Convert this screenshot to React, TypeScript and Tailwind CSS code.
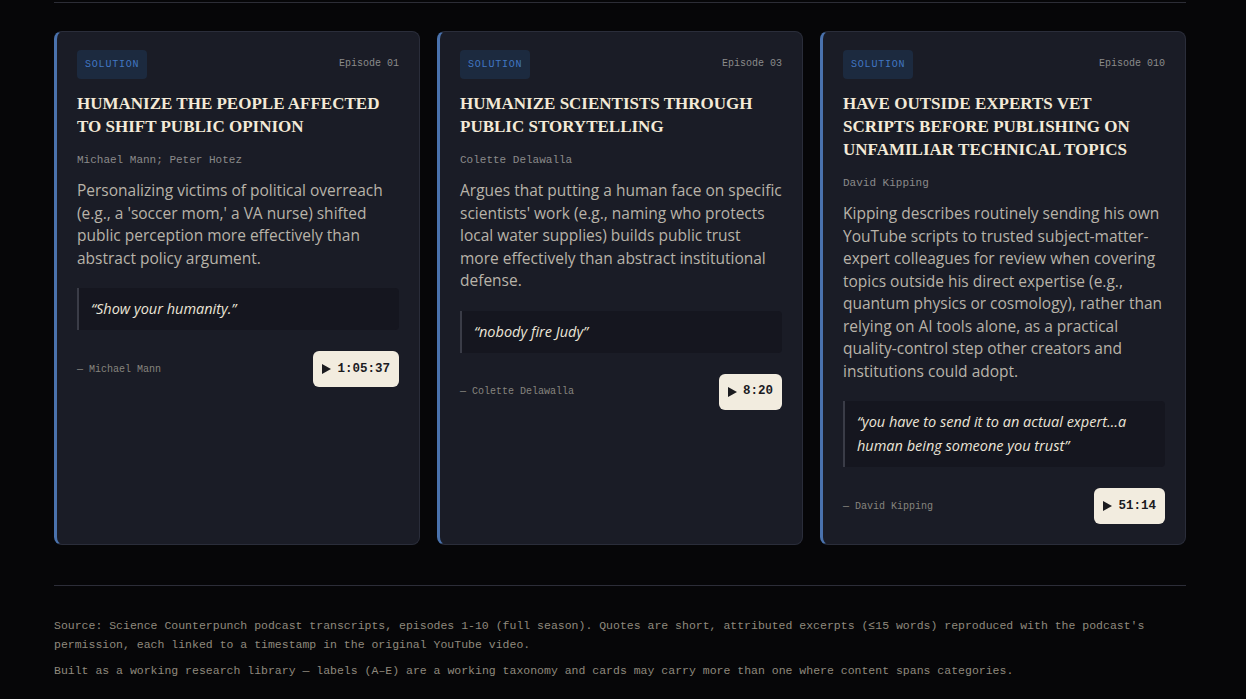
import React from 'react';

interface Solution {
  episode: string;
  title: string;
  speakers: string;
  summary: string;
  quote: string;
  quoteBy: string;
  stamp: string;
}

const solutions: Solution[] = [
  {
    episode: 'Episode 01',
    title: 'Humanize the people affected to shift public opinion',
    speakers: 'Michael Mann; Peter Hotez',
    summary:
      "Personalizing victims of political overreach (e.g., a 'soccer mom,' a VA nurse) shifted public perception more effectively than abstract policy argument.",
    quote: '\u201CShow your humanity.\u201D',
    quoteBy: 'Michael Mann',
    stamp: '1:05:37',
  },
  {
    episode: 'Episode 03',
    title: 'Humanize scientists through public storytelling',
    speakers: 'Colette Delawalla',
    summary:
      "Argues that putting a human face on specific scientists' work (e.g., naming who protects local water supplies) builds public trust more effectively than abstract institutional defense.",
    quote: '\u201Cnobody fire Judy\u201D',
    quoteBy: 'Colette Delawalla',
    stamp: '8:20',
  },
  {
    episode: 'Episode 010',
    title: 'Have outside experts vet scripts before publishing on unfamiliar technical topics',
    speakers: 'David Kipping',
    summary:
      'Kipping describes routinely sending his own YouTube scripts to trusted subject-matter-expert colleagues for review when covering topics outside his direct expertise (e.g., quantum physics or cosmology), rather than relying on AI tools alone, as a practical quality-control step other creators and institutions could adopt.',
    quote: '\u201Cyou have to send it to an actual expert\u2026a human being someone you trust\u201D',
    quoteBy: 'David Kipping',
    stamp: '51:14',
  },
];

const mono = "font-['Liberation_Mono','DejaVu_Sans_Mono',monospace]";
const body = "font-['Open_Sans','Noto_Sans',sans-serif]";

function SolutionCard({ s }: { s: Solution }) {
  return (
    <article className="flex flex-col rounded-lg border border-[#2a2d3a] border-l-[3px] border-l-[#4a72ad] bg-[#1a1c26] px-5 pt-[18px] pb-5">
      <div className="flex items-start justify-between">
        <span className={`${mono} rounded bg-[#1c2a3f] px-2 py-[8px] text-[10px] leading-[13px] tracking-[0.08em] text-[#4176c2]`}>
          SOLUTION
        </span>
        <span className={`${mono} pt-[6px] text-[10px] text-[#8b8b8b]`}>{s.episode}</span>
      </div>

      <h3 className="mt-[13px] font-['Liberation_Serif','DejaVu_Serif',serif] text-[17px] font-bold uppercase leading-[23px] text-[#f3ead8]">
        {s.title}
      </h3>

      <p className={`${mono} mt-[14px] text-[11px] leading-4 text-[#8a8a8a]`}>{s.speakers}</p>

      <p className={`${body} mt-[11px] text-[15.5px] leading-[22.5px] text-[#b8b3a9]`}>{s.summary}</p>

      <blockquote className={`${body} mt-[19px] rounded-r border-l-2 border-[#3a3c47] bg-[#15161f] py-[9px] pl-3 pr-3 text-[14.5px] italic leading-6 text-[#ebe5d8]`}>
        {s.quote}
      </blockquote>

      <div className="mt-[21px] flex items-center justify-between">
        <span className={`${mono} text-[10px] text-[#86847e]`}>{'\u2014'} {s.quoteBy}</span>
        <button className={`${mono} flex h-9 items-center gap-[6px] rounded-md bg-[#f2ecdf] px-[9px] text-[12.5px] font-bold text-[#1b1b1f]`}>
          <svg width="9" height="10" viewBox="0 0 9 10" className="fill-[#1b1b1f]">
            <path d="M0 0 L9 5 L0 10 Z" />
          </svg>
          {s.stamp}
        </button>
      </div>
    </article>
  );
}

export default function App() {
  return (
    <div className="min-h-screen bg-[#060608] pt-[2px] pl-[54px]">
      <div className="w-[1132px]">
        <div className="border-t border-[#2c2d36]" />

        <div className="mt-[28px] grid grid-cols-3 gap-[17px]">
          {solutions.map(s => (
            <SolutionCard key={s.episode} s={s} />
          ))}
        </div>

        <hr className="mt-[40px] border-[#2c2d38]" />

        <footer className={`${mono} pt-[30px] text-[11.5px] leading-[19px] text-[#8f897d]`}>
          <p>
            Source: Science Counterpunch podcast transcripts, episodes 1-10 (full season). Quotes are short, attributed
            excerpts ({'\u2264'}15 words) reproduced with the podcast's permission, each linked to a timestamp in the
            original YouTube video.
          </p>
          <p className="mt-[7px]">
            Built as a working research library {'\u2014'} labels (A{'\u2013'}E) are a working taxonomy and cards may carry
            more than one where content spans categories.
          </p>
        </footer>
      </div>
    </div>
  );
}
